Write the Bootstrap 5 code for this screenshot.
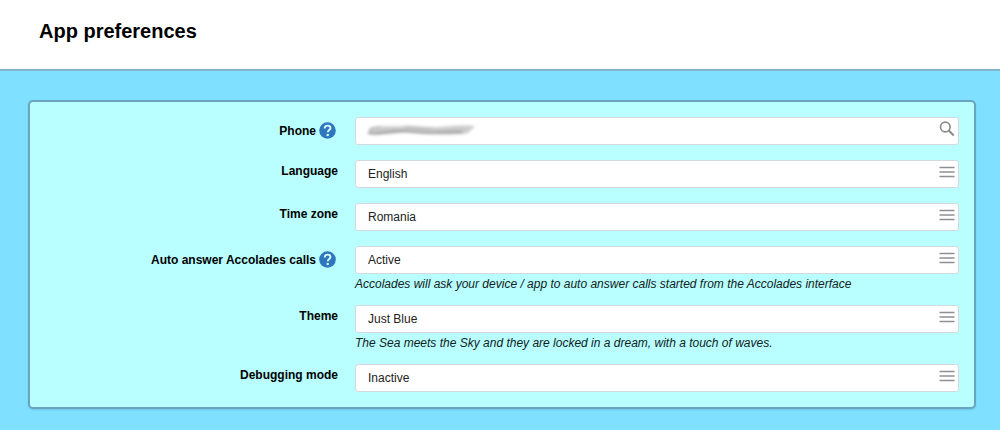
<!DOCTYPE html>
<html lang="en">
<head>
<meta charset="utf-8">
<meta name="viewport" content="width=device-width, initial-scale=1">
<title>App preferences</title>
<link href="https://cdn.jsdelivr.net/npm/bootstrap@5.3.0/dist/css/bootstrap.min.css" rel="stylesheet">
<style>
  body { background: #7fe1ff; font-family: "Liberation Sans", Arial, sans-serif; font-size: 12px; color: #000; }
  .page-head { background: #fff; border-bottom: 2px solid #84b4cd; padding: 19px 39px 25px; }
  .page-head h1 { font-size: 20px; line-height: 25px; font-weight: 700; }
  .page-main { padding: 29px 24px 22px 28px; }
  .panel { background: #b9ffff; border: 2px solid #6aa5c0; border-radius: 5px; padding: 15px 5px 15px 3px; box-shadow: 0 1px 2px rgba(40, 90, 130, .2); }
  .pref-rows { display: grid; row-gap: 15px; }
  .pref-label { padding: 4px 7px 0 0; line-height: 15px; font-weight: 700; text-align: right; }
  .has-help .pref-label { padding-top: 5px; line-height: 19px; }
  .pref-field { padding: 0 10px; }
  .pref-control { height: 28px; padding: 0 30px 1px 12px; border: 1px solid #d3d9dc; border-radius: 3px; background: #fff; color: #222; font-size: 12px; line-height: 16px; }
  .field-icon { top: 4px; right: 4px; pointer-events: none; }
  .redaction { top: 5px; left: 10px; pointer-events: none; }
  .hint { height: 16px; padding-top: 2px; line-height: 16px; font-style: italic; color: #122; white-space: nowrap; }
  .help { width: 17px; height: 17px; margin: 0 2px 0 3px; }
</style>
</head>
<body>
<svg class="d-none" aria-hidden="true">
  <symbol id="bars" viewBox="0 0 16 16"><path d="M.5 3.500h15M.5 8h15M.5 12.500h15" stroke="#8e8e96" stroke-width="1.400"/></symbol>
  <symbol id="question" viewBox="0 0 17 17"><circle cx="8.500" cy="8.500" r="8.300" fill="#2f77bd"/><path d="M5.700 6.400C5.700 4.500 7 3.600 8.600 3.600c1.700 0 2.900 1 2.900 2.500 0 2-2.700 2-2.700 4.200" fill="none" stroke="#d9faff" stroke-width="1.900"/><circle cx="8.700" cy="12.900" r="1.250" fill="#d9faff"/></symbol>
</svg>
<header class="page-head"><h1 class="m-0">App preferences</h1></header>
<main class="page-main">
  <form class="panel">
    <div class="pref-rows">
      <div class="row g-0 has-help">
        <div class="col-4 pref-label d-flex justify-content-end align-items-start"><label for="phone">Phone</label><button type="button" class="help btn p-0 border-0 d-flex" aria-label="Help on phone"><svg width="17" height="17"><use href="#question"/></svg></button></div>
        <div class="col-8 pref-field"><div class="position-relative">
          <input id="phone" type="text" class="pref-control w-100 d-block">
          <svg class="redaction position-absolute" width="114" height="18" viewBox="0 0 114 18" aria-hidden="true">
            <defs><filter id="soft" x="-10%" y="-50%" width="120%" height="200%"><feGaussianBlur stdDeviation="1.500"/></filter></defs>
            <g filter="url(#soft)" fill="none">
              <path d="M4 6c10-3 22-1 34-2s24 2 36 1 24-2 36-1l-7 7c-10 2-22 2-34 1s-22-2-34-1-20 2-31 1z" fill="#ccc"/>
              <path d="M3 11c10 2 22-2 33-2s17 2 29 2 22-2 33-1" stroke="#999" stroke-width="2"/>
              <path d="M4 11c0-4 5-6 11-6M40 5c10 0 18 3 28 2" stroke="#aaa" stroke-width="1"/>
            </g>
          </svg>
          <svg class="field-icon position-absolute" width="16" height="16" viewBox="0 0 16 16" fill="none" stroke="#8c8c8c" aria-hidden="true"><circle cx="6.300" cy="6" r="4.800" stroke-width="1.700"/><path d="M9.800 9.500L14.700 14.400" stroke-width="2.100"/></svg>
        </div></div>
      </div>
      <div class="row g-0">
        <div class="col-4 pref-label"><label for="language">Language</label></div>
        <div class="col-8 pref-field"><div class="position-relative">
          <select id="language" class="pref-control w-100 d-block form-select"><option>English</option></select>
          <svg class="field-icon position-absolute" width="16" height="16" aria-hidden="true"><use href="#bars"/></svg>
        </div></div>
      </div>
      <div class="row g-0">
        <div class="col-4 pref-label"><label for="timezone">Time zone</label></div>
        <div class="col-8 pref-field"><div class="position-relative">
          <select id="timezone" class="pref-control w-100 d-block form-select"><option>Romania</option></select>
          <svg class="field-icon position-absolute" width="16" height="16" aria-hidden="true"><use href="#bars"/></svg>
        </div></div>
      </div>
      <div class="row g-0 has-help">
        <div class="col-4 pref-label d-flex justify-content-end align-items-start"><label for="autoanswer">Auto answer Accolades calls</label><button type="button" class="help btn p-0 border-0 d-flex" aria-label="Help on auto answer"><svg width="17" height="17"><use href="#question"/></svg></button></div>
        <div class="col-8 pref-field"><div class="position-relative">
          <select id="autoanswer" class="pref-control w-100 d-block form-select"><option>Active</option></select>
          <svg class="field-icon position-absolute" width="16" height="16" aria-hidden="true"><use href="#bars"/></svg>
        </div><div class="hint">Accolades will ask your device / app to auto answer calls started from the Accolades interface</div></div>
      </div>
      <div class="row g-0">
        <div class="col-4 pref-label"><label for="theme">Theme</label></div>
        <div class="col-8 pref-field"><div class="position-relative">
          <select id="theme" class="pref-control w-100 d-block form-select"><option>Just Blue</option></select>
          <svg class="field-icon position-absolute" width="16" height="16" aria-hidden="true"><use href="#bars"/></svg>
        </div><div class="hint">The Sea meets the Sky and they are locked in a dream, with a touch of waves.</div></div>
      </div>
      <div class="row g-0">
        <div class="col-4 pref-label"><label for="debugging">Debugging mode</label></div>
        <div class="col-8 pref-field"><div class="position-relative">
          <select id="debugging" class="pref-control w-100 d-block form-select"><option>Inactive</option></select>
          <svg class="field-icon position-absolute" width="16" height="16" aria-hidden="true"><use href="#bars"/></svg>
        </div></div>
      </div>
    </div>
  </form>
</main>
<script src="https://cdn.jsdelivr.net/npm/bootstrap@5.3.0/dist/js/bootstrap.bundle.min.js"></script>
</body>
</html>
